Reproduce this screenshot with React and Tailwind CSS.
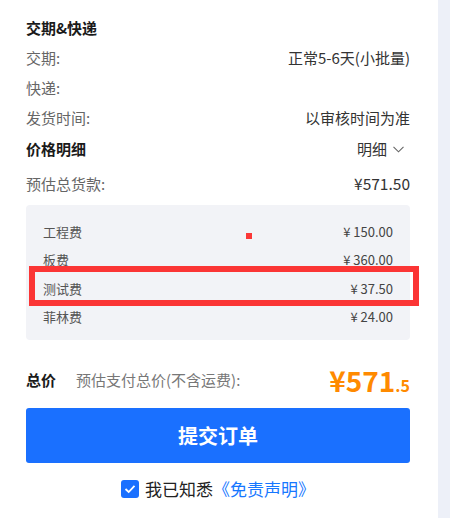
import React from "react";

const font = { fontFamily: '"Noto Sans CJK SC", "Noto Sans", sans-serif' };

const infoRows = [
  { label: "交期:", value: "正常5-6天(小批量)" },
  { label: "快递:", value: "" },
  { label: "发货时间:", value: "以审核时间为准" },
];

const feeRows = [
  { label: "工程费", value: "¥ 150.00" },
  { label: "板费", value: "¥ 360.00" },
  { label: "测试费", value: "¥ 37.50" },
  { label: "菲林费", value: "¥ 24.00" },
];

const App = () => {
  return (
    <div className="flex w-[450px] h-[518px] bg-[#edf0f8] overflow-hidden" style={font}>
      {/* Order summary panel */}
      <div className="w-[438px] h-full bg-white pl-[26px] pr-[28px] pt-[13px] flex flex-col">
        <div className="h-[30px] flex items-center text-[15px] font-bold text-[#1a1a1a]">
          交期&amp;快递
        </div>

        {infoRows.map((row) => (
          <div key={row.label} className="h-[30px] flex items-center justify-between text-[15px]">
            <span className="text-[#666]">{row.label}</span>
            <span className="text-[#333]">{row.value}</span>
          </div>
        ))}

        <div className="h-[33px] flex items-center justify-between">
          <span className="text-[15px] font-bold text-[#1a1a1a]">价格明细</span>
          <span className="flex items-center gap-[6px] text-[15px] text-[#333] pr-[6px]">
            明细
            <svg width="11" height="7" viewBox="0 0 11 7" fill="none">
              <polyline points="0.5,0.8 5.5,5.8 10.5,0.8" stroke="#666" strokeWidth="1.1" />
            </svg>
          </span>
        </div>

        <div className="h-[36px] flex items-center justify-between text-[15px]">
          <span className="text-[#666]">预估总货款:</span>
          <span className="text-[#333] text-[15.5px]">¥571.50</span>
        </div>

        {/* Fee breakdown */}
        <div className="relative mt-[3px] h-[135px] bg-[#f2f3f7] rounded-[4px] pt-[12px] pl-[17px] pr-[17px]">
          {feeRows.map((row) => (
            <div key={row.label} className="h-[28.5px] flex items-center justify-between text-[13px]">
              <span className="text-[#555]">{row.label}</span>
              <span className="text-[#444]">{row.value}</span>
            </div>
          ))}
          {/* annotation marks */}
          <div className="absolute left-[220px] top-[28px] w-[6px] h-[6px] bg-[#fb3737]" />
          <div className="absolute left-[3px] top-[61px] w-[390px] h-[40px] border-[6px] border-[#fb3535]" />
        </div>

        {/* Total */}
        <div className="mt-[20px] h-[40px] flex items-center justify-between">
          <div className="flex items-center">
            <span className="text-[15px] font-bold text-[#1a1a1a] w-[50px]">总价</span>
            <span className="text-[15px] text-[#777]">预估支付总价(不含运费):</span>
          </div>
          <div className="flex items-baseline font-bold text-[#ff8a00]">
            <span className="text-[28px] leading-none">¥571</span>
            <span className="text-[16px] leading-none">.5</span>
          </div>
        </div>

        <button className="mt-[8px] h-[55px] w-full rounded-[3px] bg-[#1a70ff] text-white text-[20px] font-bold">
          提交订单
        </button>

        <div className="mt-[16px] h-[20px] flex items-center justify-center">
          <span className="w-[18px] h-[18px] rounded-[3px] bg-[#1a70ff] flex items-center justify-center mr-[6px]">
            <svg width="12" height="10" viewBox="0 0 12 10" fill="none">
              <polyline points="1.5,5 4.7,8 10.5,1.8" stroke="white" strokeWidth="1.8" />
            </svg>
          </span>
          <span className="text-[17px] text-[#222]">我已知悉</span>
          <span className="text-[17px] text-[#1677ff]">《免责声明》</span>
        </div>
      </div>
    </div>
  );
};

export default App;
